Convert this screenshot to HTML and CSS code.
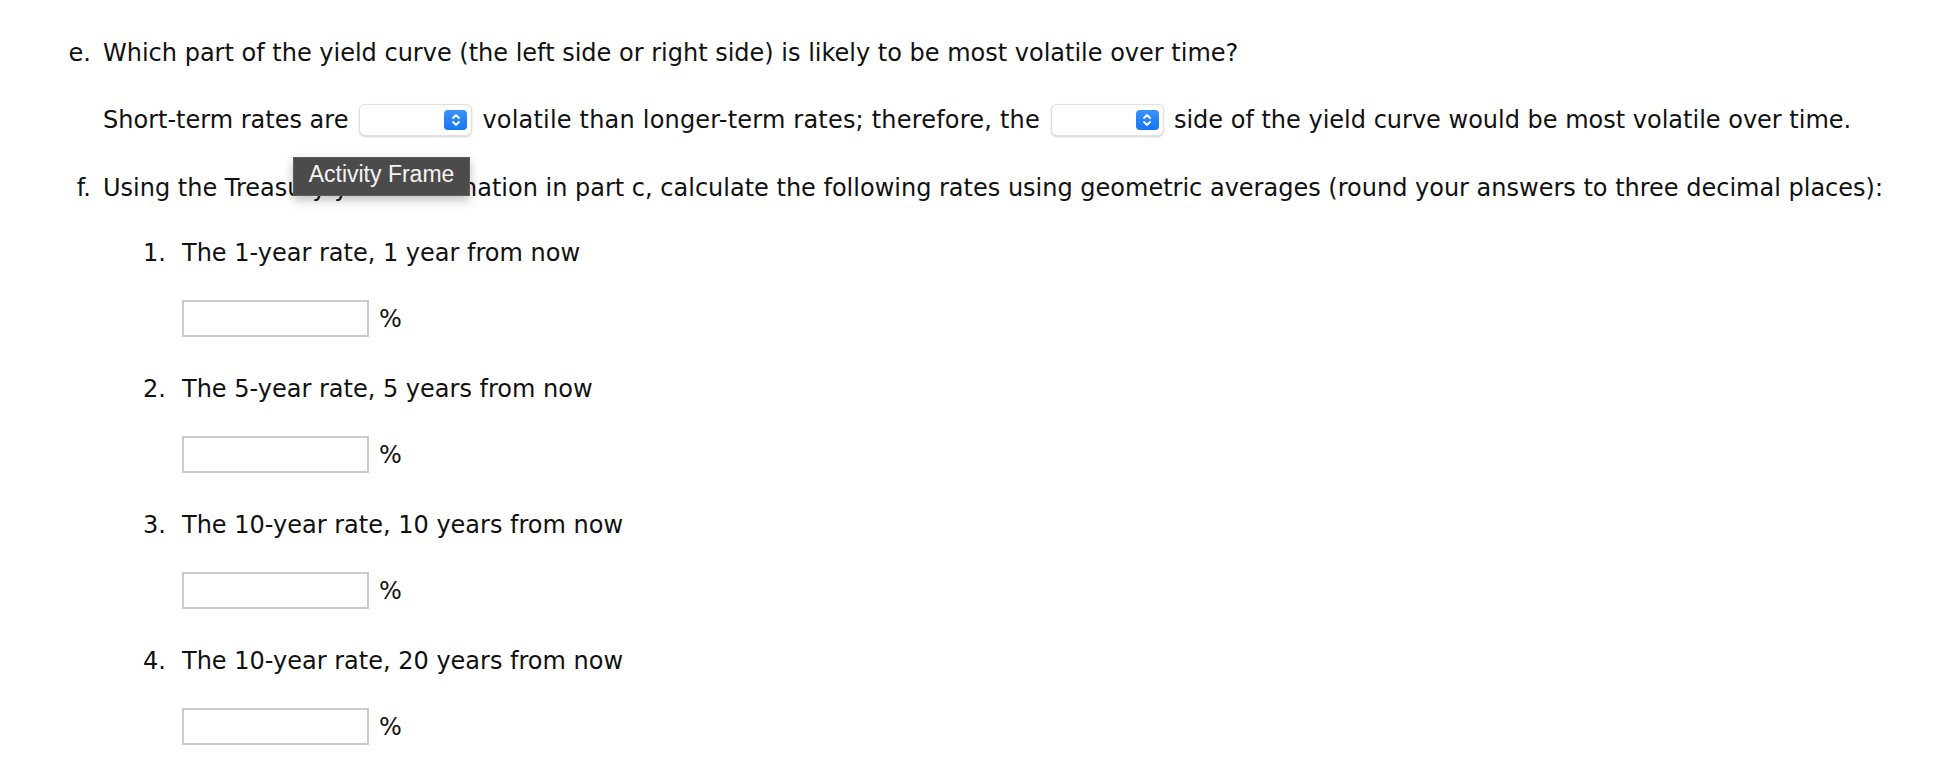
FILE: index.html
```html
<!DOCTYPE html>
<html>
<head>
<meta charset="utf-8">
<link rel="stylesheet" href="styles.css">
</head>
<body>
<div class="page">
  <div class="part part-e">
    <span class="marker">e.</span>
    <span class="ptext">Which part of the yield curve (the left side or right side) is likely to be most volatile over time?</span>
  </div>
  <div class="answer">
    <span>Short-term rates are</span>
    <span class="select"><span class="sbtn"><svg width="10" height="14" viewBox="0 0 10 14"><path d="M2 5 L5 2 L8 5" fill="none" stroke="#fff" stroke-width="1.8" stroke-linecap="round" stroke-linejoin="round"/><path d="M2 9 L5 12 L8 9" fill="none" stroke="#fff" stroke-width="1.8" stroke-linecap="round" stroke-linejoin="round"/></svg></span></span>
    <span class="mid">volatile than longer-term rates; therefore, the</span>
    <span class="select"><span class="sbtn"><svg width="10" height="14" viewBox="0 0 10 14"><path d="M2 5 L5 2 L8 5" fill="none" stroke="#fff" stroke-width="1.8" stroke-linecap="round" stroke-linejoin="round"/><path d="M2 9 L5 12 L8 9" fill="none" stroke="#fff" stroke-width="1.8" stroke-linecap="round" stroke-linejoin="round"/></svg></span></span>
    <span>side of the yield curve would be most volatile over time.</span>
  </div>
  <div class="part part-f">
    <span class="marker">f.</span>
    <span class="ptext">Using the Treasury yield information in part c, calculate the following rates using geometric averages (round your answers to three decimal places):</span>
    <div class="tooltip">Activity Frame</div>
  </div>
  <div class="items">
    <div class="item">
      <div class="item-line"><span class="num">1.</span><span>The 1-year rate, 1 year from now</span></div>
      <div class="input-row"><span class="box"></span><span class="pct">%</span></div>
    </div>
    <div class="item">
      <div class="item-line"><span class="num">2.</span><span>The 5-year rate, 5 years from now</span></div>
      <div class="input-row"><span class="box"></span><span class="pct">%</span></div>
    </div>
    <div class="item">
      <div class="item-line"><span class="num">3.</span><span>The 10-year rate, 10 years from now</span></div>
      <div class="input-row"><span class="box"></span><span class="pct">%</span></div>
    </div>
    <div class="item">
      <div class="item-line"><span class="num">4.</span><span>The 10-year rate, 20 years from now</span></div>
      <div class="input-row"><span class="box"></span><span class="pct">%</span></div>
    </div>
  </div>
</div>
</body>
</html>
```

FILE: styles.css
```css
html, body {
  margin: 0;
  padding: 0;
  background: #fff;
}
body {
  font-family: "DejaVu Sans", Verdana, sans-serif;
  font-size: 24px;
  color: #111;
}
.page {
  padding-top: 33px;
}
.part {
  position: relative;
  display: flex;
  align-items: center;
  height: 40px;
  white-space: nowrap;
}
.marker {
  box-sizing: border-box;
  width: 103px;
  text-align: right;
  padding-right: 12px;
}
.answer {
  display: flex;
  align-items: center;
  height: 40px;
  margin-top: 27px;
  padding-left: 103px;
  white-space: nowrap;
}
.mid {
  letter-spacing: 0.2px;
}
.part-f {
  margin-top: 28px;
}
.select {
  box-sizing: border-box;
  width: 113px;
  height: 32px;
  margin: 0 10px 0 11px;
  border: 1px solid #e0e0e0;
  border-radius: 6px;
  background: #fff;
  box-shadow: 0 1px 2px rgba(0,0,0,0.18);
  display: flex;
  align-items: center;
  justify-content: flex-end;
  padding-right: 4px;
}
.sbtn {
  width: 23px;
  height: 20px;
  border-radius: 4px;
  background: linear-gradient(#3b93fb, #1476f3);
  display: flex;
  align-items: center;
  justify-content: center;
}
.tooltip {
  position: absolute;
  left: 293px;
  top: -11px;
  box-sizing: border-box;
  width: 177px;
  height: 39px;
  background: #4b4b4b;
  border: 1px solid #5e5e5e;
  color: #f4f4f4;
  font-family: "Liberation Sans", Arial, sans-serif;
  font-size: 23px;
  display: flex;
  align-items: center;
  justify-content: center;
  padding-bottom: 4px;
  box-shadow: 0 4px 10px rgba(0,0,0,0.25);
}
.items {
  margin-top: 25px;
}
.item {
  padding-bottom: 32px;
}
.item-line {
  display: flex;
  align-items: center;
  height: 40px;
  white-space: nowrap;
  padding-left: 143px;
}
.num {
  box-sizing: border-box;
  width: 39px;
}
.input-row {
  display: flex;
  align-items: center;
  margin-top: 27px;
  padding-left: 182px;
  height: 37px;
}
.box {
  box-sizing: border-box;
  width: 187px;
  height: 37px;
  border: 2px solid #cbcbcb;
  background: #fff;
}
.pct {
  margin-left: 10px;
}
```
